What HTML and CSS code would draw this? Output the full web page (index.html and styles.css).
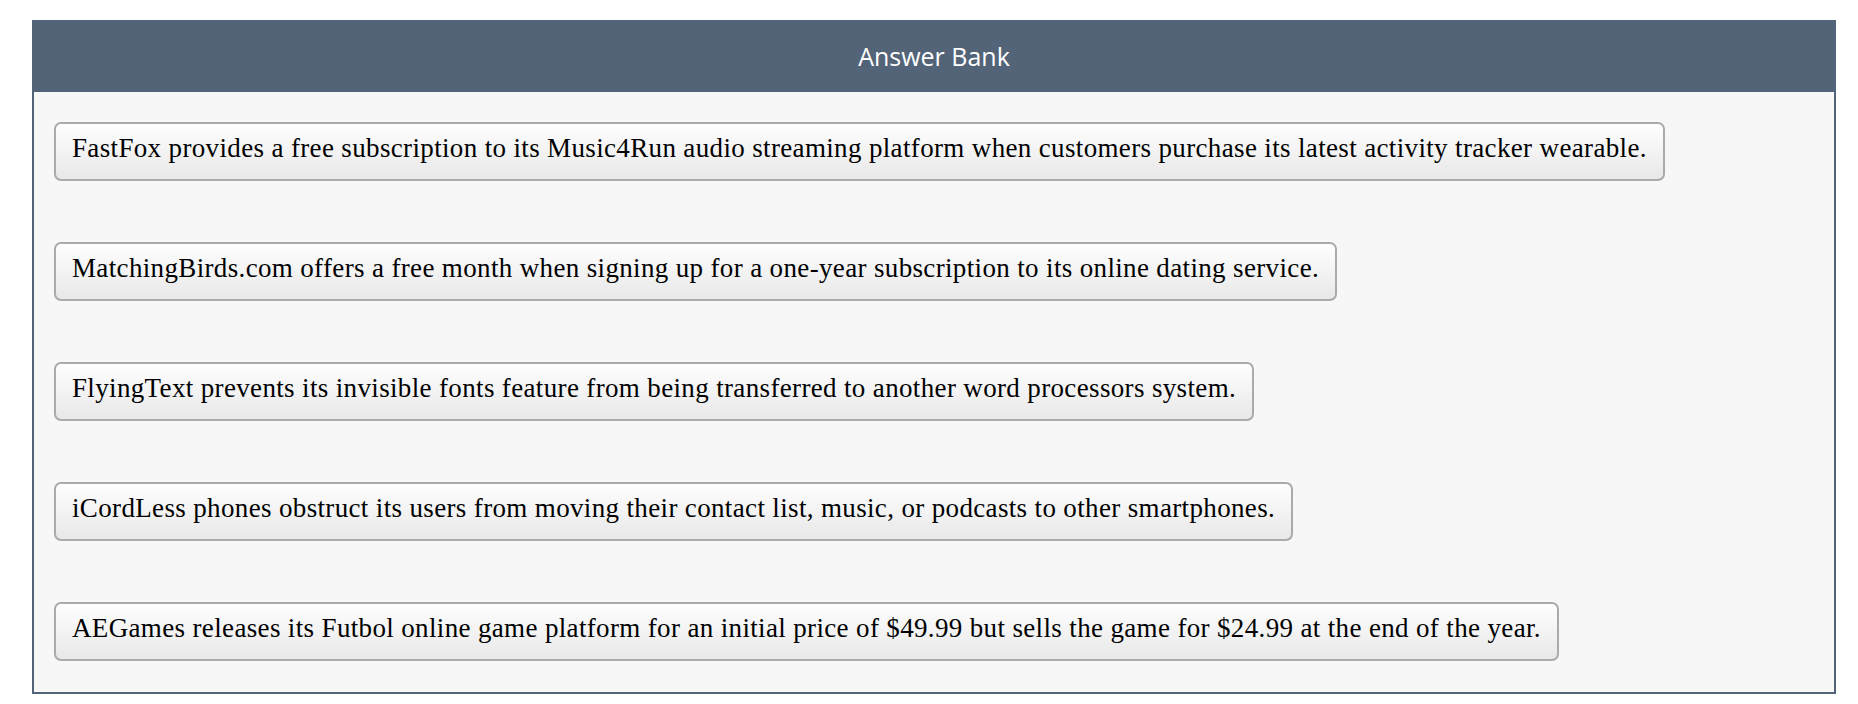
FILE: index.html
```html
<!DOCTYPE html>
<html lang="en">
<head>
    <meta charset="UTF-8">
    <meta name="viewport" content="width=device-width, initial-scale=1.0">
    <title>Answer Bank</title>
    <link rel="stylesheet" href="styles.css">
</head>
<body>
    <div class="bank-container">
        <div class="bank-header">Answer Bank</div>
        <div class="bank-list">
            <button type="button" class="answer-button">FastFox provides a free subscription to its Music4Run audio streaming platform when customers purchase its latest activity tracker wearable.</button>
            <button type="button" class="answer-button">MatchingBirds.com offers a free month when signing up for a one-year subscription to its online dating service.</button>
            <button type="button" class="answer-button">FlyingText prevents its invisible fonts feature from being transferred to another word processors system.</button>
            <button type="button" class="answer-button">iCordLess phones obstruct its users from moving their contact list, music, or podcasts to other smartphones.</button>
            <button type="button" class="answer-button">AEGames releases its Futbol online game platform for an initial price of $49.99 but sells the game for $24.99 at the end of the year.</button>
        </div>
    </div>
</body>
</html>
```

FILE: styles.css
```css
body {
    margin: 20px 22px 0 32px;
    background-color: #fff;
}
.bank-container {
    border: 2px solid #536378;
    border-top: none;
    background-color: #f7f7f7;
}
.bank-header {
    height: 72px;
    margin: 0 -2px;
    background-color: #536378;
    color: #fff;
    font-family: "Open Sans", sans-serif;
    font-size: 25px;
    display: flex;
    align-items: center;
    justify-content: center;
}
.bank-list {
    display: flex;
    flex-direction: column;
    align-items: flex-start;
    gap: 61px;
    padding: 30px 20px 31px 20px;
}
.answer-button {
    font-family: "Liberation Serif", "Times New Roman", serif;
    font-size: 27px;
    letter-spacing: 0.35px;
    line-height: 30px;
    color: #000;
    padding: 9px 16px 16px 16px;
    border: 2px solid #aaaaaa;
    border-radius: 7px;
    background: linear-gradient(to bottom, #fefefe, #e8e8e8);
    text-align: left;
    cursor: pointer;
}
```
